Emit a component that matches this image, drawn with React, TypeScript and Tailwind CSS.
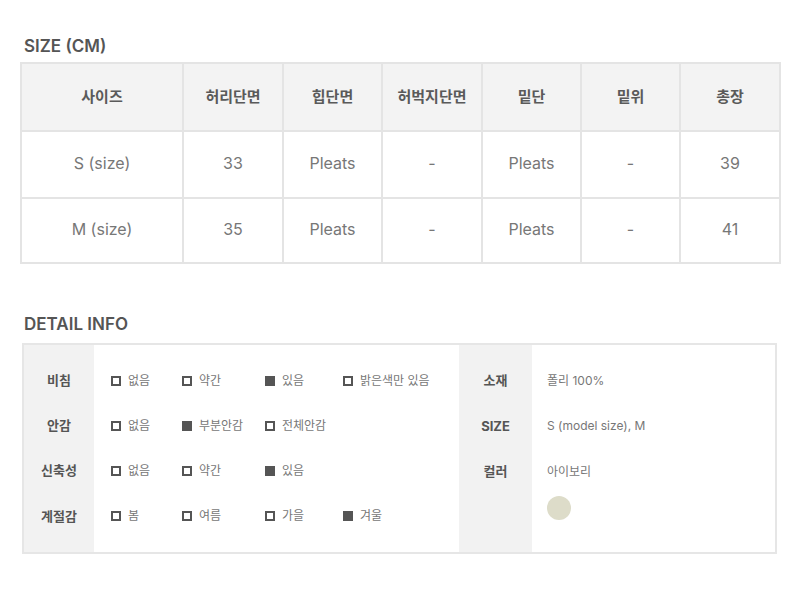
const sizeHeaders = ["사이즈", "허리단면", "힙단면", "허벅지단면", "밑단", "밑위", "총장"];
const colWidths = ["w-[162px]", "w-[100px]", "w-[99px]", "w-[100px]", "w-[99px]", "w-[99px]", "w-[100px]"];
const sizeRows = [
  ["S (size)", "33", "Pleats", "-", "Pleats", "-", "39"],
  ["M (size)", "35", "Pleats", "-", "Pleats", "-", "41"],
];

interface TOption {
  label: string
  checked: boolean
}

const detailRows: { title: string; options: TOption[] }[] = [
  {
    title: "비침",
    options: [
      { label: "없음", checked: false },
      { label: "약간", checked: false },
      { label: "있음", checked: true },
      { label: "밝은색만 있음", checked: false },
    ],
  },
  {
    title: "안감",
    options: [
      { label: "없음", checked: false },
      { label: "부분안감", checked: true },
      { label: "전체안감", checked: false },
    ],
  },
  {
    title: "신축성",
    options: [
      { label: "없음", checked: false },
      { label: "약간", checked: false },
      { label: "있음", checked: true },
    ],
  },
  {
    title: "계절감",
    options: [
      { label: "봄", checked: false },
      { label: "여름", checked: false },
      { label: "가을", checked: false },
      { label: "겨울", checked: true },
    ],
  },
];

const optionWidths = ["w-[71px]", "w-[83px]", "w-[78px]", "w-[100px]"];

function Check({ checked }: { checked: boolean }) {
  return checked ? (
    <span className="inline-block w-[10px] h-[10px] bg-[#555]" />
  ) : (
    <span className="inline-block w-[10px] h-[10px] border-2 border-[#555]" />
  );
}

export default function App() {
  return (
    <div
      className="w-[800px] h-[616px] bg-white pt-[36px]"
      style={{ fontFamily: "Inter, 'Noto Sans CJK KR', sans-serif" }}
    >
      <h2 className="ml-[24px] text-[17px] leading-[20px] font-semibold text-[#555] mb-[6px]">
        SIZE (CM)
      </h2>
      <table className="ml-[20px] w-[759px] border-collapse table-fixed">
        <colgroup>
          {colWidths.map((w, i) => (
            <col key={i} className={w} />
          ))}
        </colgroup>
        <thead>
          <tr className="bg-[#f3f3f3] h-[68px]">
            {sizeHeaders.map((h) => (
              <th
                key={h}
                className="border-2 border-[#e4e4e4] text-[15px] font-semibold text-[#5a5a5a] text-center"
              >
                {h}
              </th>
            ))}
          </tr>
        </thead>
        <tbody>
          {sizeRows.map((row, r) => (
            <tr key={r} className={r === 0 ? "h-[67px]" : "h-[65px]"}>
              {row.map((c, i) => (
                <td
                  key={i}
                  className="border-2 border-[#e4e4e4] pb-[4px] text-[16px] text-[#777] text-center"
                >
                  {c}
                </td>
              ))}
            </tr>
          ))}
        </tbody>
      </table>

      <h2 className="ml-[24px] mt-[50px] text-[17px] leading-[20px] font-semibold text-[#555] mb-[9px]">
        DETAIL INFO
      </h2>
      <div className="ml-[22px] w-[755px] h-[211px] border-2 border-[#e6e6e6] flex">
        <div className="w-[70px] bg-[#f2f2f2] py-[13px] flex flex-col">
          {detailRows.map((d) => (
            <div
              key={d.title}
              className="h-[45.5px] flex items-center justify-center text-[13px] font-bold text-[#555]"
            >
              {d.title}
            </div>
          ))}
        </div>
        <div className="w-[365px] py-[13px] pl-[17px] flex flex-col">
          {detailRows.map((d) => (
            <div key={d.title} className="h-[45.5px] flex items-center">
              {d.options.map((o, i) => (
                <div
                  key={o.label}
                  className={`${optionWidths[i]} flex items-center gap-[7px] text-[12px] text-[#777]`}
                >
                  <Check checked={o.checked} />
                  <span>{o.label}</span>
                </div>
              ))}
            </div>
          ))}
        </div>
        <div className="w-[73px] bg-[#f2f2f2] py-[13px] flex flex-col">
          {["소재", "SIZE", "컬러"].map((t) => (
            <div
              key={t}
              className="h-[45.5px] flex items-center justify-center text-[13px] font-bold text-[#555]"
            >
              {t}
            </div>
          ))}
        </div>
        <div className="flex-1 py-[13px] pl-[15px] flex flex-col">
          {["폴리 100%", "S (model size), M", "아이보리"].map((t) => (
            <div key={t} className="h-[45.5px] flex items-center text-[12px] text-[#777]">
              {t}
            </div>
          ))}
          <div className="pt-[1px]">
            <span className="block w-[24px] h-[24px] rounded-full bg-[#dddcc9]" />
          </div>
        </div>
      </div>
    </div>
  );
}
